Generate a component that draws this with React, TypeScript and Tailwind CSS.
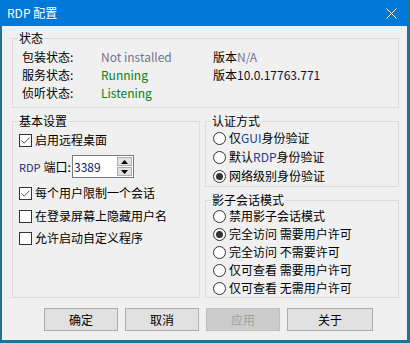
import React from 'react';

type GroupProps = { title: string; className?: string; children?: React.ReactNode };

// Windows-style group box: border with the caption sitting on the top line
const Group: React.FC<GroupProps> = ({ title, className = '', children }) => (
  <div className={`relative border border-[#dcdcdc] ${className}`}>
    <span className="absolute left-[5px] top-[-9px] bg-[#f0f0f0] px-[1px] leading-[16px]">{title}</span>
    {children}
  </div>
);

const CheckBox: React.FC<{ checked?: boolean; label: string; className?: string }> = ({ checked, label, className = '' }) => (
  <div className={`flex items-center h-[18px] ${className}`}>
    <span className="w-[13px] h-[13px] border border-[#333333] bg-white flex items-center justify-center shrink-0">
      {checked && (
        <svg width="11" height="11" viewBox="0 0 11 11">
          <path d="M1.5 5.5 L4.2 8.2 L9.5 2.6" stroke="#555555" strokeWidth="1" fill="none" />
        </svg>
      )}
    </span>
    <span className="ml-[3px] whitespace-nowrap">{label}</span>
  </div>
);

const Radio: React.FC<{ checked?: boolean; children: React.ReactNode }> = ({ checked, children }) => (
  <div className="flex items-center h-[18px]">
    <span className="w-[13px] h-[13px] rounded-full border border-[#333333] bg-white flex items-center justify-center shrink-0">
      {checked && <span className="w-[7px] h-[7px] rounded-full bg-[#333333]" />}
    </span>
    <span className="ml-[3px] whitespace-nowrap">{children}</span>
  </div>
);

const Btn: React.FC<{ label: string; disabled?: boolean; wide?: boolean }> = ({ label, disabled, wide }) => (
  <button
    className={`h-[23px] ${wide ? 'w-[86px]' : 'w-[74px]'} border flex items-center justify-center ${
      disabled ? 'bg-[#cccccc] border-[#bfbfbf] text-[#a0a0a0]' : 'bg-[#e1e1e1] border-[#adadad] text-black'
    }`}
  >
    {label}
  </button>
);

export default function App() {
  return (
    <div className="w-[410px] h-[343px] bg-[#1a7596] flex flex-col text-[12px] text-black font-['Noto_Sans_CJK_SC',sans-serif] leading-[18px]">
      {/* Title bar */}
      <div className="w-[407px] h-[26px] bg-[#0078d7] flex items-center justify-between text-white shrink-0">
        <span className="pl-[7px]">RDP 配置</span>
        <svg width="11" height="11" viewBox="0 0 11 11" className="mr-[10px]">
          <path d="M0.5 0.5 L10.5 10.5 M10.5 0.5 L0.5 10.5" stroke="white" strokeWidth="1" />
        </svg>
      </div>

      {/* Body */}
      <div className="ml-[2px] w-[405px] h-[314px] bg-[#f0f0f0] pl-[10px] pt-[12px] shrink-0">
        {/* Status */}
        <Group title="状态" className="w-[387px] h-[70px]">
          <div className="grid grid-cols-[79px_112px_1fr] auto-rows-[18px] pl-[9px] pt-[9px] items-center">
            <span>包装状态:</span>
            <span className="text-[#74748a]">Not installed</span>
            <span>
              版本<span className="text-[#74748a]">N/A</span>
            </span>
            <span>服务状态:</span>
            <span className="text-[#078020]">Running</span>
            <span>
              版本<span className="text-[#101038]">10.0.17763.771</span>
            </span>
            <span>侦听状态:</span>
            <span className="text-[#078020]">Listening</span>
            <span />
          </div>
        </Group>

        <div className="flex gap-[5px] mt-[13px]">
          {/* Basic settings */}
          <Group title="基本设置" className="w-[188px] h-[177px]">
            <div className="flex flex-col pl-[6px]">
              <CheckBox checked label="启用远程桌面" className="mt-[9px]" />
              <div className="flex items-center h-[23px] mt-[6px]">
                <span className="w-[53px] whitespace-nowrap">
                  <span className="text-[#1e2a78] text-[11px]">RDP</span>
                  <span className="ml-[3px]">端口:</span>
                </span>
                <div className="w-[62px] h-[23px] border border-[#7a7a7a] bg-white flex items-center">
                  <span className="pl-[1px] text-[#0a1a6a]">3389</span>
                  <div className="ml-auto mr-[1px] flex flex-col gap-[1px]">
                    <span className="w-[15px] h-[9px] bg-[#e1e1e1] border border-[#adadad] flex items-center justify-center">
                      <svg width="7" height="4" viewBox="0 0 7 4">
                        <path d="M0 4 L3.5 0 L7 4 Z" fill="black" />
                      </svg>
                    </span>
                    <span className="w-[15px] h-[9px] bg-[#e1e1e1] border border-[#adadad] flex items-center justify-center">
                      <svg width="7" height="4" viewBox="0 0 7 4">
                        <path d="M0 0 L3.5 4 L7 0 Z" fill="black" />
                      </svg>
                    </span>
                  </div>
                </div>
              </div>
              <CheckBox checked label="每个用户限制一个会话" className="mt-[6px]" />
              <CheckBox label="在登录屏幕上隐藏用户名" className="mt-[5px]" />
              <CheckBox label="允许启动自定义程序" className="mt-[4px]" />
            </div>
          </Group>

          <div className="w-[194px] flex flex-col">
            {/* Auth */}
            <Group title="认证方式" className="h-[66px]">
              <div className="flex flex-col gap-[1px] pl-[7px] pt-[7px]">
                <Radio>
                  仅<span className="text-[#1e3a9a]">GUI</span>身份验证
                </Radio>
                <Radio>
                  默认<span className="text-[#1e3a9a]">RDP</span>身份验证
                </Radio>
                <Radio checked>网络级别身份验证</Radio>
              </div>
            </Group>

            {/* Shadow */}
            <Group title="影子会话模式" className="h-[98px] mt-[13px]">
              <div className="flex flex-col pl-[7px] pt-[6px]">
                <Radio>禁用影子会话模式</Radio>
                <Radio checked>完全访问 需要用户许可</Radio>
                <Radio>完全访问 不需要许可</Radio>
                <Radio>仅可查看 需要用户许可</Radio>
                <Radio>仅可查看 无需用户许可</Radio>
              </div>
            </Group>
          </div>
        </div>

        {/* Buttons */}
        <div className="flex gap-[7px] ml-[32px] mt-[10px]">
          <Btn label="确定" />
          <Btn label="取消" />
          <Btn label="应用" disabled />
          <Btn label="关于" wide />
        </div>
      </div>
    </div>
  );
}
